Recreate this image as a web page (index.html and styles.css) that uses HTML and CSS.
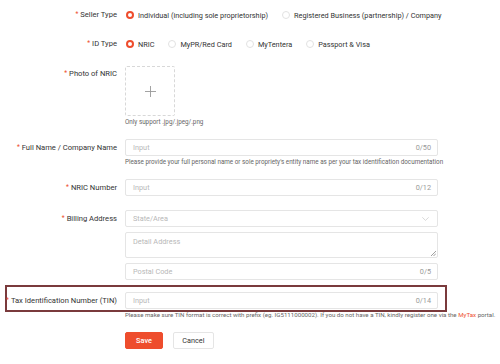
FILE: index.html
```html
<!DOCTYPE html>
<html lang="en">

<head>
    <meta charset="UTF-8">
    <meta name="viewport" content="width=device-width, initial-scale=1.0">
    <title>Seller Information</title>
    <link rel="stylesheet" href="styles.css">
</head>

<body>
    <div class="form">
        <div class="row">
            <div class="label"><span class="req">*</span>Seller Type</div>
            <div class="control radios">
                <label class="radio checked"><i></i>Individual (including sole proprietorship)</label>
                <label class="radio"><i></i>Registered Business (partnership) / Company</label>
            </div>
        </div>
        <div class="row idtype">
            <div class="label"><span class="req">*</span>ID Type</div>
            <div class="control radios">
                <label class="radio checked"><i></i>NRIC</label>
                <label class="radio"><i></i>MyPR/Red Card</label>
                <label class="radio"><i></i>MyTentera</label>
                <label class="radio"><i></i>Passport &amp; Visa</label>
            </div>
        </div>
        <div class="row photo">
            <div class="label"><span class="req">*</span>Photo of NRIC</div>
            <div class="control">
                <div class="upload">
                    <svg width="11" height="11" viewBox="0 0 11 11">
                        <path d="M5.5 0v11M0 5.5h11" stroke="#999" stroke-width="0.9" fill="none" />
                    </svg>
                </div>
                <div class="hint">Only support .jpg/.jpeg/.png</div>
            </div>
        </div>
        <div class="row">
            <div class="label"><span class="req">*</span>Full Name / Company Name</div>
            <div class="control">
                <div class="input"><span class="ph">Input</span><span class="count">0/50</span></div>
                <div class="hint">Please provide your full personal name or sole propriety's entity name as per your tax identification documentation</div>
            </div>
        </div>
        <div class="row">
            <div class="label"><span class="req">*</span>NRIC Number</div>
            <div class="control">
                <div class="input"><span class="ph">Input</span><span class="count">0/12</span></div>
            </div>
        </div>
        <div class="row billing">
            <div class="label"><span class="req">*</span>Billing Address</div>
            <div class="control stack">
                <div class="input select"><span class="ph">State/Area</span>
                    <svg width="7" height="4" viewBox="0 0 7 4">
                        <path d="M0.3 0.3L3.5 3.4L6.7 0.3" stroke="#c8c8c8" stroke-width="0.7" fill="none" />
                    </svg>
                </div>
                <div class="input textarea"><span class="ph">Detail Address</span>
                    <svg class="grip" width="6" height="6" viewBox="0 0 6 6">
                        <path d="M1 6L6 1M3.5 6L6 3.5" stroke="#777" stroke-width="0.7" fill="none" />
                    </svg>
                </div>
                <div class="input"><span class="ph">Postal Code</span><span class="count">0/5</span></div>
            </div>
        </div>
        <div class="row marked">
            <div class="label"><span class="req">*</span>Tax Identification Number (TIN)</div>
            <div class="control">
                <div class="input"><span class="ph">Input</span><span class="count">0/14</span></div>
                <div class="hint">Please make sure TIN format is correct with prefix (eg. IG5111000002). If you do not have a TIN, kindly register one via the <a href="#">MyTax</a> portal.</div>
            </div>
        </div>
        <div class="row buttons">
            <div class="label"></div>
            <div class="control">
                <button class="btn save">Save</button>
                <button class="btn cancel">Cancel</button>
            </div>
        </div>
    </div>
</body>

</html>
```

FILE: styles.css
```css
*,
*::before,
*::after {
    margin: 0;
    padding: 0;
    box-sizing: border-box;
}

body {
    font-family: Roboto, "Liberation Sans", sans-serif;
    font-size: 7.6px;
    color: #333;
    background: #fff;
}

.form {
    padding-top: 7px;
}

.row {
    display: grid;
    grid-template-columns: 117px 313px;
    column-gap: 8px;
    margin-bottom: 13px;
    position: relative;
}

.label {
    text-align: right;
    line-height: 17px;
    white-space: nowrap;
}

.req {
    color: #ee4d2d;
    font-size: 6.5px;
    margin-right: 2px;
    position: relative;
    top: -1px;
}

/* radio groups */
.radios {
    display: flex;
    align-items: center;
    height: 16px;
    white-space: nowrap;
}

.row .label:has(+ .radios) {
    line-height: 16px;
}

.idtype {
    margin-bottom: 14px;
}

.radio {
    display: flex;
    align-items: center;
    margin-right: 13px;
    font-size: 7.3px;
}

.radio i {
    width: 8px;
    height: 8px;
    border-radius: 50%;
    border: 1px solid #e2e2e2;
    margin-right: 4px;
    margin-left: 1px;
}

.radio.checked i {
    border: 2.5px solid #ee4d2d;
}

/* upload */
.photo {
    margin-bottom: 12px;
}

.photo .label {
    line-height: 16px;
}

.upload {
    width: 50px;
    height: 50px;
    border: 1px dashed #d8d8d8;
    border-radius: 2px;
    display: flex;
    align-items: center;
    justify-content: center;
}

.hint {
    font-size: 6.3px;
    color: #666;
    line-height: 10px;
    margin-top: 1px;
    white-space: nowrap;
}

.marked .hint {
    font-size: 6.15px;
}

.hint a {
    color: #ee4d2d;
    text-decoration: none;
}

/* inputs */
.input {
    height: 17px;
    border: 1px solid #e5e5e5;
    border-radius: 2px;
    display: flex;
    align-items: center;
    justify-content: space-between;
    padding: 0 6px 0 7px;
    font-size: 7.3px;
}

.ph {
    color: #b8b8b8;
}

.count {
    color: #999;
}

.row:has(.hint) {
    margin-bottom: 12px;
}

.billing {
    margin-bottom: 12px;
}

.stack .input + .input {
    margin-top: 5px;
}

.select svg {
    margin-right: 2px;
}

.textarea {
    height: 26px;
    align-items: flex-start;
    padding-top: 4px;
    position: relative;
}

.grip {
    position: absolute;
    right: 1px;
    bottom: 1px;
}

/* highlighted row */
.marked::before {
    content: "";
    position: absolute;
    left: 5px;
    top: -7px;
    width: 442px;
    height: 27px;
    border: 2px solid #7a3a3c;
}

/* buttons */
.btn {
    height: 17px;
    border-radius: 2px;
    font-family: inherit;
    font-size: 7.3px;
    margin-right: 6px;
    cursor: pointer;
}

.save {
    width: 38px;
    background: #ee4d2d;
    border: 1px solid #ee4d2d;
    color: #fff;
    font-weight: 500;
}

.cancel {
    width: 41px;
    background: #fff;
    border: 1px solid #e5e5e5;
    color: #333;
    margin-left: 2px;
}
```
